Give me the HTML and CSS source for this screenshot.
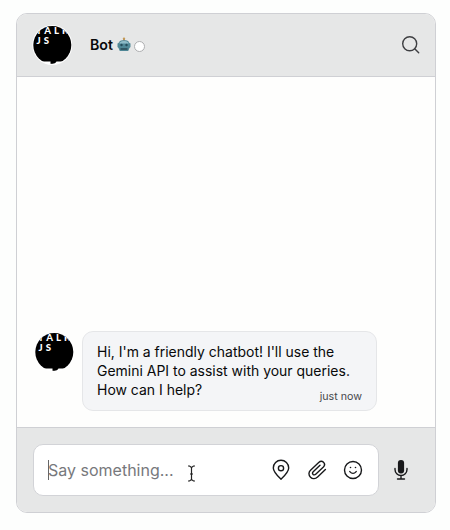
FILE: index.html
```html
<!DOCTYPE html>
<html lang="en">
<head>
<meta charset="utf-8">
<title>Bot chat</title>
<link rel="stylesheet" href="styles.css">
</head>
<body>
<svg width="0" height="0" class="defs" aria-hidden="true">
  <defs>
    <clipPath id="round"><circle cx="20.300" cy="20" r="19"/></clipPath>
    <symbol id="logo" viewBox="0 0 40 40">
      <circle cx="20.300" cy="20" r="20" fill="#fff"/>
      <g clip-path="url(#round)">
        <path d="M0 0H40V36.500H24.500Q23.500 39 18.500 39V36.500H0Z" fill="#000"/>
        <g class="logo-text">
          <text x="4" y="8.900">T</text>
          <text x="12.200" y="8.900">A</text>
          <text x="22" y="8.900">L</text>
          <text x="30" y="8.900">K</text>
          <text x="4.500" y="19">J</text>
          <text x="11.700" y="19">S</text>
        </g>
      </g>
    </symbol>
  </defs>
</svg>
<main class="chat">
  <header class="header">
    <svg class="avatar" width="40" height="40"><use href="#logo"/></svg>
    <h1 class="name">Bot</h1>
    <svg class="robot" width="14" height="15" viewBox="0 0 14 15">
      <path d="M7 1.500V4" stroke="#8b6a5a" stroke-width="1.500"/>
      <circle cx="7" cy="1.800" r="1.200" fill="#c39a58"/>
      <path d="M1.500 6Q2.500 3.300 5 3.300H9Q11.500 3.300 12.500 6L13.500 6.500V10L12.500 11L11.200 14H2.800L1.500 11L.5 10V6.500Z" fill="#4f8796"/>
      <path d="M2.500 5.500Q7 2 11.500 5.500V6.500H2.500Z" fill="#8dbac7"/>
      <circle cx="4.500" cy="8" r="1.200" fill="#254c5b"/>
      <circle cx="9.500" cy="8" r="1.200" fill="#254c5b"/>
      <path d="M3.500 12H10.500" stroke="#294954" stroke-width="1.700"/>
    </svg>
    <span class="status"></span>
    <svg class="search" width="20" height="20" viewBox="0 0 20 20">
      <circle cx="8.700" cy="8.700" r="7"/><path d="M13.700 13.700L17.700 17.700"/>
    </svg>
  </header>
  <section class="messages">
    <svg class="avatar" width="40" height="40"><use href="#logo"/></svg>
    <div class="bubble">
      <p>Hi, I'm a friendly chatbot! I'll use the<br>Gemini API to assist with your queries.<br>How can I help?</p>
      <time>just now</time>
    </div>
  </section>
  <footer class="footer">
    <div class="field">
      <span class="caret"></span>
      <span class="placeholder">Say something...</span>
      <svg class="pointer" width="9" height="17" viewBox="0 0 9 17">
        <path d="M1 1H2.500L4.500 2.500L6.500 1H8M4.500 2.500V14.500M1 16H2.500L4.500 14.500L6.500 16H8M3 9H6"/>
      </svg>
      <svg class="icon" width="20" height="22" viewBox="0 0 20 22">
        <path d="M10 20.200C6.500 16.800 2.300 12.800 2.300 8.900A7.700 7.700 0 0 1 17.700 8.900C17.700 12.800 13.500 16.800 10 20.200Z"/><circle cx="10" cy="9.200" r="2.600"/>
      </svg>
      <svg class="icon clip" width="20" height="20" viewBox="0 0 20 20">
        <path d="M18.400 9.600L10.600 16.900C8.500 18.900 5.500 19.200 3.500 17.200C1.300 15 1.600 12.200 3.500 10.300L11.700 2.500C13.200 1.100 15.200 1 16.500 2.300C17.900 3.700 17.800 5.600 16.400 7L8.700 14.300C7.900 15.100 6.800 15.100 6.100 14.400C5.300 13.600 5.400 12.600 6.200 11.800L13 5.300"/>
      </svg>
      <svg class="icon smile" width="20" height="20" viewBox="0 0 20 20">
        <circle cx="10" cy="10" r="8.500"/><path d="M6.800 11.600Q10 15.200 13.200 11.600"/>
        <circle class="dot" cx="7.500" cy="7.500" r=".8"/><circle class="dot" cx="12.500" cy="7.500" r=".8"/>
      </svg>
    </div>
    <svg class="mic" width="14" height="22" viewBox="0 0 14 22">
      <rect x="3.900" y="1" width="6.200" height="13.500" rx="3"/>
      <path d="M1 9.500V10.500A6 6 0 0 0 13 10.500V9.500M7 16.500V20M3.500 20H10.500"/>
    </svg>
  </footer>
</main>
</body>
</html>
```
FILE: styles.css
```css
* { box-sizing: border-box; }
body {
  margin: 0;
  padding: 13px 14px 17px 16px;
  background: #fdfefd;
  font-family: Inter, "Liberation Sans", sans-serif;
  color: #08090a;
}
svg { display: block; flex: none; }
.defs { position: absolute; }
.chat {
  display: flex;
  flex-direction: column;
  height: 500px;
  border: 1px solid #cfd0d4;
  border-radius: 11px;
  overflow: hidden;
  background: #fefefd;
}
.header {
  display: flex;
  align-items: center;
  height: 63px;
  padding: 0 14px 0 15px;
  background: #e6e7e7;
  border-bottom: 1px solid #cfd0d4;
}
.logo-text { fill: #fff; font: 900 9.6px Lato, sans-serif; }
.name { margin: 0 0 0 18px; font-size: 14.200px; line-height: 20px; font-weight: 600; }
.robot { margin: -2px 0 0 4px; }
.status { width: 11px; height: 11px; margin: 2px 0 0 3px; border: 1px solid #aeafb1; border-radius: 50%; background: #fff; }
.search { margin-left: auto; fill: none; stroke: #3e3f42; stroke-width: 1.400; stroke-linecap: round; }
.messages {
  display: flex;
  flex: 1;
  align-items: flex-end;
  padding: 0 0 16px 17px;
}
.messages .avatar { margin-bottom: 39px; }
.bubble {
  position: relative;
  width: 295px;
  height: 80px;
  margin-left: 8px;
  padding: 10px 14px;
  border: 1px solid #e5e6e8;
  border-radius: 11px;
  background: #f4f5f7;
}
.bubble p { margin: 0; font-size: 13.970px; line-height: 19.200px; white-space: nowrap; }
.bubble time { position: absolute; right: 14px; bottom: 6px; font-size: 10.700px; line-height: 14px; color: #47484b; }
.footer {
  display: flex;
  align-items: center;
  height: 85px;
  padding: 0 16px;
  border-top: 1px solid #cfd0d4;
  background: #e6e7e7;
}
.field {
  display: flex;
  align-items: center;
  width: 346px;
  height: 52px;
  padding: 0 15px 0 14px;
  border: 1px solid #d2d3d7;
  border-radius: 10px;
  background: #fff;
}
.caret { width: 1px; height: 20px; background: #666; }
.placeholder { margin-left: -1px; font-size: 16px; line-height: 22px; color: #77787c; white-space: nowrap; }
.pointer { margin: 7px auto 0 13px; fill: none; stroke: #222; stroke-width: 1.200; }
.icon { fill: none; stroke: #18191b; stroke-width: 1.400; stroke-linecap: round; stroke-linejoin: round; }
.clip { margin-left: 16px; }
.smile { margin-left: 16px; }
.dot { fill: #18191b; stroke: none; }
.mic { margin-left: 15px; fill: none; stroke: #18191b; stroke-width: 1.400; stroke-linecap: round; }
.mic rect { fill: #18191b; stroke: none; }
```
